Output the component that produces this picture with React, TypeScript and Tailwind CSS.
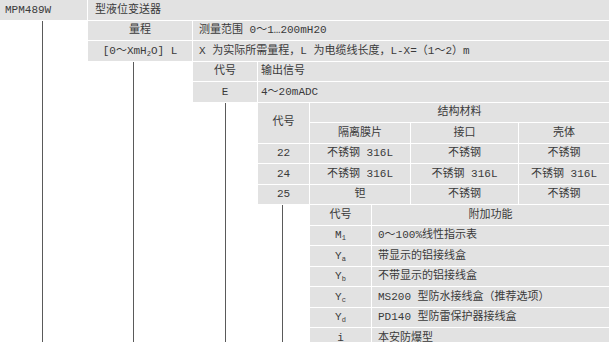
import type { ReactNode } from "react";

const CELL = "h-[19.5px] bg-[#e2e2e2] flex items-center whitespace-nowrap";

function Gutter({ width, line }: { width: string; line: string }) {
  // connector line running down the white space left of the next level
  return (
    <div className={`${width} shrink-0 self-stretch`}>
      <div className={`${line} h-full w-px bg-[#5a5a5a]`} />
    </div>
  );
}

function Code({ base, sub }: { base: string; sub: string }) {
  return (
    <span>
      {base}
      <span className="relative top-[2px] text-[7px]">{sub}</span>
    </span>
  );
}

const MATERIALS: [string, string, string, string][] = [
  ["22", "不锈钢 316L", "不锈钢", "不锈钢"],
  ["24", "不锈钢 316L", "不锈钢 316L", "不锈钢 316L"],
  ["25", "钽", "不锈钢", "不锈钢"],
];

const EXTRAS: [ReactNode, string][] = [
  [<Code base="M" sub="1" />, "0～100%线性指示表"],
  [<Code base="Y" sub="a" />, "带显示的铝接线盒"],
  [<Code base="Y" sub="b" />, "不带显示的铝接线盒"],
  [<Code base="Y" sub="c" />, "MS200 型防水接线盒（推荐选项）"],
  [<Code base="Y" sub="d" />, "PD140 型防雷保护器接线盒"],
  ["i", "本安防爆型"],
];

export default function App() {
  return (
    <div className="h-[342px] w-[609px] overflow-hidden bg-white font-['Liberation_Mono','Noto_Sans_CJK_SC',monospace] text-[11px] text-[#3a3a3a]">
      <div className="flex flex-col gap-px">
        <div className="flex gap-px">
          <div className={`${CELL} w-[87px] pl-[5px]`}>MPM489W</div>
          <div className={`${CELL} flex-1 pl-[7px]`}>型液位变送器</div>
        </div>

        <div className="flex">
          <Gutter width="w-[88px]" line="ml-[42px]" />
          <div className="flex flex-1 flex-col gap-px">
            <div className="flex gap-px">
              <div className={`${CELL} w-[104px] justify-center`}>量程</div>
              <div className={`${CELL} flex-1 pl-[6px]`}>测量范围 0～1…200mH20</div>
            </div>
            <div className="flex gap-px">
              <div className={`${CELL} w-[104px] justify-center`}>
                <span>
                  [0～XmH<span className="relative top-[2px] text-[7px]">2</span>O] L
                </span>
              </div>
              <div className={`${CELL} flex-1 pl-[6px]`}>
                X 为实际所需量程，L 为电缆线长度，L-X=（1～2）m
              </div>
            </div>

            <div className="flex">
              <Gutter width="w-[105px]" line="ml-[45px]" />
              <div className="flex flex-1 flex-col gap-px">
                <div className="flex gap-px">
                  <div className={`${CELL} w-[64px] justify-center`}>代号</div>
                  <div className={`${CELL} flex-1 pl-[3px]`}>输出信号</div>
                </div>
                <div className="flex gap-px">
                  <div className={`${CELL} w-[64px] justify-center`}>E</div>
                  <div className={`${CELL} flex-1 pl-[3px]`}>4～20mADC</div>
                </div>

                <div className="flex">
                  <Gutter width="w-[65px]" line="ml-[32px]" />
                  <div className="flex flex-1 flex-col gap-px">
                    <div className="flex gap-px">
                      <div className="flex h-[40px] w-[51px] items-center justify-center bg-[#e2e2e2]">
                        代号
                      </div>
                      <div className="flex flex-1 flex-col gap-px">
                        <div className={`${CELL} justify-center`}>结构材料</div>
                        <div className="flex gap-px">
                          <div className={`${CELL} w-[100px] justify-center`}>隔离膜片</div>
                          <div className={`${CELL} w-[107px] justify-center`}>接口</div>
                          <div className={`${CELL} flex-1 justify-center`}>壳体</div>
                        </div>
                      </div>
                    </div>
                    {MATERIALS.map(([code, a, b, c]) => (
                      <div key={code} className="flex gap-px">
                        <div className={`${CELL} w-[51px] justify-center`}>{code}</div>
                        <div className={`${CELL} w-[100px] justify-center`}>{a}</div>
                        <div className={`${CELL} w-[107px] justify-center`}>{b}</div>
                        <div className={`${CELL} flex-1 justify-center`}>{c}</div>
                      </div>
                    ))}

                    <div className="flex">
                      <Gutter width="w-[52px]" line="ml-[24px]" />
                      <div className="flex flex-1 flex-col gap-px">
                        <div className="flex gap-px">
                          <div className={`${CELL} w-[61px] justify-center`}>代号</div>
                          <div className={`${CELL} flex-1 justify-center`}>附加功能</div>
                        </div>
                        {EXTRAS.map(([code, text], i) => (
                          <div key={i} className="flex gap-px">
                            <div className={`${CELL} w-[61px] justify-center`}>{code}</div>
                            <div className={`${CELL} flex-1 pl-[6px]`}>{text}</div>
                          </div>
                        ))}
                      </div>
                    </div>
                  </div>
                </div>
              </div>
            </div>
          </div>
        </div>
      </div>
    </div>
  );
}
